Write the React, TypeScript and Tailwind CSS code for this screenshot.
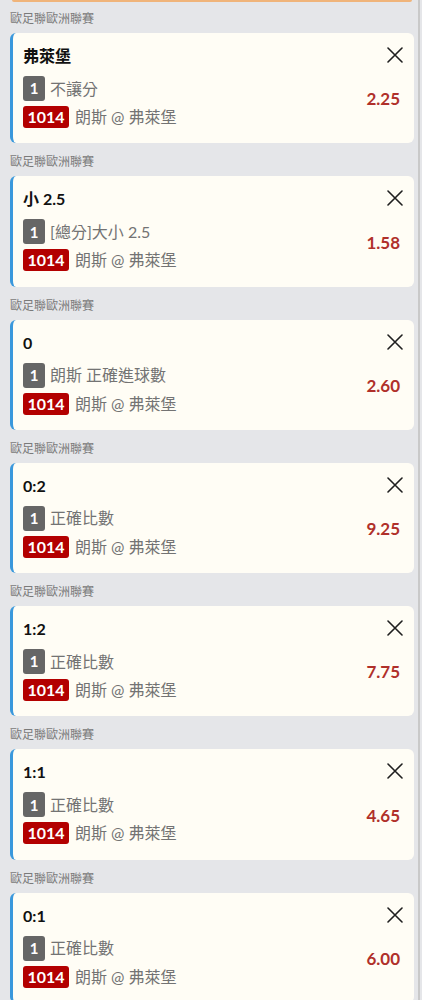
import * as React from 'react';

type Bet = {
  title: string;
  market: string;
  odds: string;
};

const bets: Bet[] = [
  { title: '弗萊堡', market: '不讓分', odds: '2.25' },
  { title: '小 2.5', market: '[總分]大小 2.5', odds: '1.58' },
  { title: '0', market: '朗斯 正確進球數', odds: '2.60' },
  { title: '0:2', market: '正確比數', odds: '9.25' },
  { title: '1:2', market: '正確比數', odds: '7.75' },
  { title: '1:1', market: '正確比數', odds: '4.65' },
  { title: '0:1', market: '正確比數', odds: '6.00' },
];

const font = { fontFamily: 'Lato, "Noto Sans CJK TC", "Noto Sans", sans-serif' };

function CloseIcon() {
  return (
    <svg width="16" height="16" viewBox="0 0 16 16" className="shrink-0">
      <path d="M1 1 L15 15 M15 1 L1 15" stroke="#1f1f1f" strokeWidth="1.6" strokeLinecap="round" />
    </svg>
  );
}

function BetCard({ bet }: { bet: Bet }) {
  return (
    <div className="flex h-[110.3px] flex-col rounded-[6px] border-l-[3px] border-[#3a98dc] bg-[#fffdf5] pl-[10px] pr-[12px] pt-[12px]">
      {/* Title row */}
      <div className="flex h-[22px] items-center justify-between">
        <span className="text-[16px] font-bold leading-[22px] text-[#111]">{bet.title}</span>
        <div className="-mr-[1px] mt-[-2px]">
          <CloseIcon />
        </div>
      </div>

      {/* Selection + match */}
      <div className="mt-[9px] flex items-center justify-between">
        <div className="flex flex-col gap-[5px]">
          <div className="flex items-center gap-[5px]">
            <span className="flex h-[25px] w-[22px] items-center justify-center rounded-[3px] bg-[#666666] text-[15px] font-bold text-white">
              1
            </span>
            <span className="text-[16px] leading-[22px] text-[#737373]">{bet.market}</span>
          </div>
          <div className="flex items-center gap-[6px]">
            <span className="flex h-[22px] w-[46px] items-center justify-center rounded-[3px] bg-[#b30000] text-[16px] font-bold text-white">
              1014
            </span>
            <span className="text-[16px] leading-[22px] text-[#737373]">朗斯 @ 弗萊堡</span>
          </div>
        </div>
        <span className="mb-[6px] mr-[2px] text-[17px] font-bold text-[#b0302a]">{bet.odds}</span>
      </div>
    </div>
  );
}

export default function App() {
  return (
    <div className="relative min-h-[1000px] w-[422px] overflow-hidden bg-[#e5e6e9] pl-[10px] pr-[8px]" style={font}>
      {/* bottom edge of previous block */}
      <div className="mx-[2px] h-[2px] rounded-b-[3px] bg-[#f0b47a]" />

      <div className="-mt-[2px] flex flex-col">
        {bets.map((bet, i) => (
          <div key={i} className="flex flex-col">
            <div className="h-[33px] pt-[11px] text-[12px] leading-[16px] text-[#7a7a7a]">歐足聯歐洲聯賽</div>
            <BetCard bet={bet} />
          </div>
        ))}
      </div>

      {/* overlay scrollbar */}
      <div className="absolute right-[2px] top-0 h-full w-[2px] bg-[#c9c9c9]" />
    </div>
  );
}
